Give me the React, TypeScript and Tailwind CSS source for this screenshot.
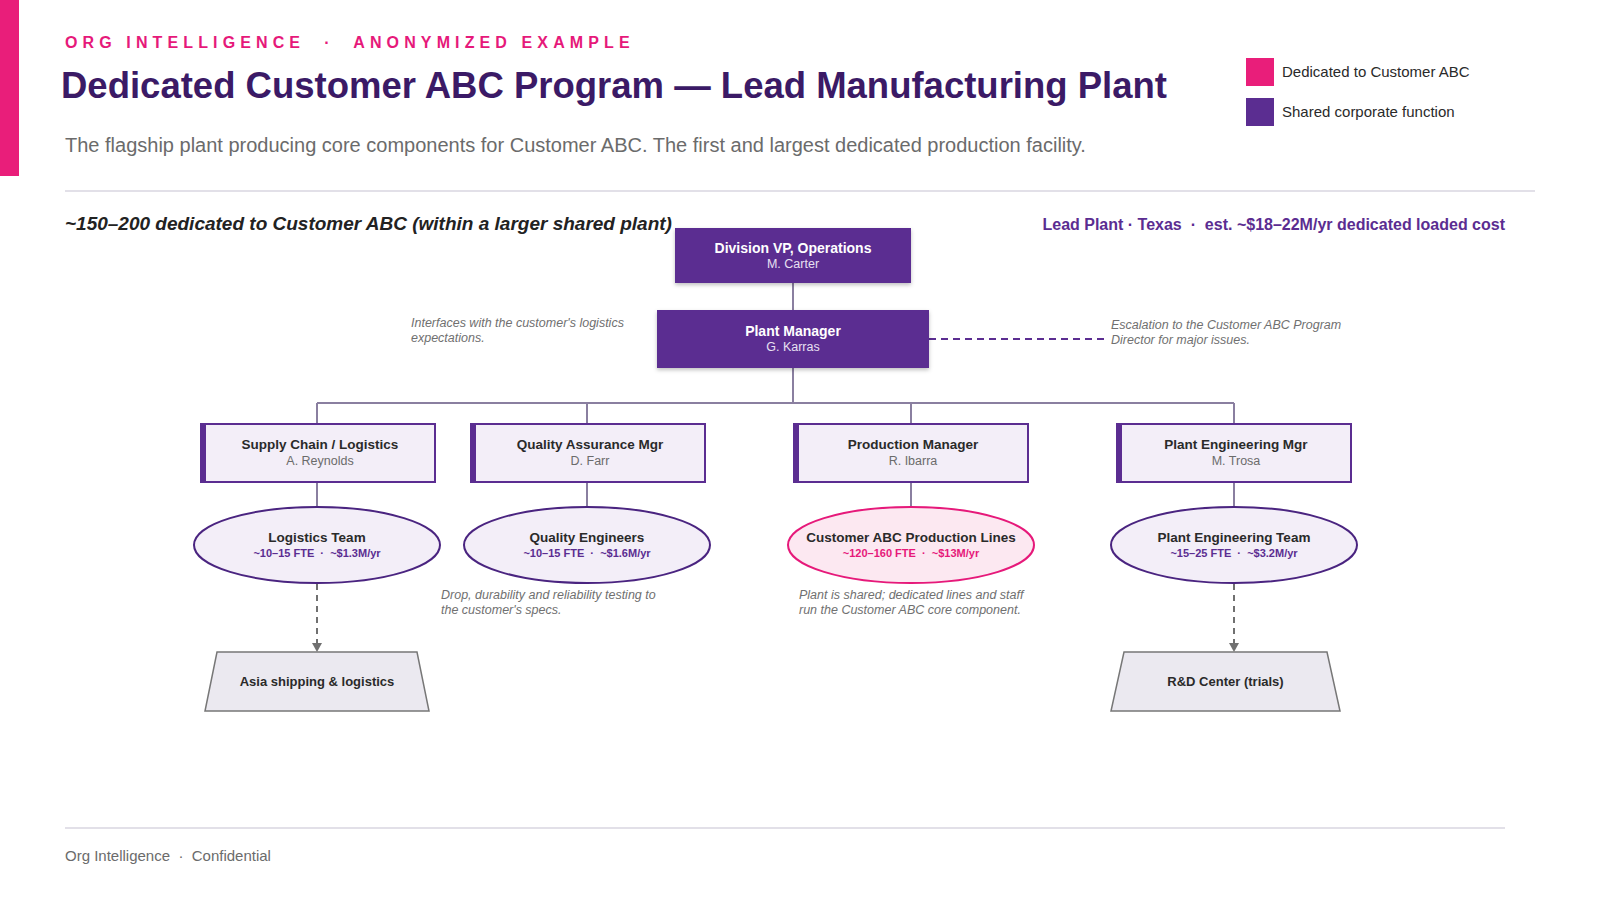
import React from "react";

const P = "#5b2d91";
const PK = "#e6197a";

function Mgr({ x, y, t, s }: { x: number; y: number; t: string; s: string }) {
  return (
    <div className="absolute flex flex-col items-center justify-center border-2 border-l-[6px] border-[#5b2d91] bg-[#f3eef8]" style={{ left: x, top: y, width: 236, height: 60 }}>
      <div className="text-[13.5px] font-bold text-[#2a2a2a] leading-[16px]">{t}</div>
      <div className="text-[12.5px] text-[#6b6b6b] leading-[16px]">{s}</div>
    </div>
  );
}

function Team({ cx, t, s, pink }: { cx: number; t: string; s: string; pink?: boolean }) {
  return (
    <div className="absolute flex flex-col items-center justify-center" style={{ left: cx - 124, top: 306, width: 248, height: 78 }}>
      <div className="text-[13.5px] font-bold text-[#2a2a2a] leading-[16px]">{t}</div>
      <div className={`text-[11px] font-bold leading-[14px] whitespace-pre ${pink ? "text-[#e6197a]" : "text-[#5b2d91]"}`}>{s}</div>
    </div>
  );
}

function Note({ x, y, children }: { x: number; y: number; children: React.ReactNode }) {
  return (
    <div className="absolute text-[12.5px] italic text-[#707070] leading-[15px] whitespace-nowrap" style={{ left: x, top: y }}>
      {children}
    </div>
  );
}

export default function App() {
  const ell = (cx: number, pink?: boolean) => (
    <ellipse cx={cx} cy={345} rx={123} ry={38} fill={pink ? "#fce8f1" : "#f3eef8"} stroke={pink ? PK : "#4a2480"} strokeWidth={2} />
  );
  return (
    <div className="relative w-full h-[899px] bg-white overflow-hidden" style={{ fontFamily: '"Liberation Sans", Arial, sans-serif' }}>
      <div className="absolute left-0 top-0 w-[19px] h-[176px] bg-[#e91e7a]" />
      <div className="absolute right-[95px] top-[58px] flex flex-col gap-[12px] text-[15px] text-[#2a2a2a] w-[259px]">
        <div className="flex items-center gap-[8px]"><span className="w-[28px] h-[28px] bg-[#e91e7a]" />Dedicated to Customer ABC</div>
        <div className="flex items-center gap-[8px]"><span className="w-[28px] h-[28px] bg-[#5b2d91]" />Shared corporate function</div>
      </div>
      <div className="px-[65px] pt-[34px] w-[1600px]">
        <div className="text-[16px] font-bold tracking-[0.32em] text-[#e6197a] leading-[18px] whitespace-nowrap">ORG INTELLIGENCE &nbsp;·&nbsp; ANONYMIZED EXAMPLE</div>
        <h1 className="mt-[12px] ml-[-4px] text-[36.5px] font-bold text-[#3b1a66] leading-[44px] whitespace-nowrap">Dedicated Customer ABC Program — Lead Manufacturing Plant</h1>
        <p className="mt-[25px] text-[20px] text-[#6b6b6b] leading-[24px] whitespace-nowrap">The flagship plant producing core components for Customer ABC. The first and largest dedicated production facility.</p>
        <div className="mt-[33px] h-[2px] bg-[#e2e0e8]" />
      </div>

      <div className="relative h-[620px] w-[1600px] mt-[8px]">
        <div className="absolute left-[65px] top-[10px] text-[19px] font-bold italic text-[#222] whitespace-nowrap">~150–200 dedicated to Customer ABC (within a larger shared plant)</div>
        <div className="absolute right-[95px] top-[13px] text-[16px] font-bold text-[#5b2d91] whitespace-nowrap">Lead Plant · Texas &nbsp;·&nbsp; est. ~$18–22M/yr dedicated loaded cost</div>

        <svg className="absolute left-0 top-0" width={1600} height={620}>
          <g stroke="#8a7fa0" strokeWidth={2} fill="none">
            <line x1={793} y1={83} x2={793} y2={110} />
            <line x1={793} y1={168} x2={793} y2={203} />
            <line x1={317} y1={203} x2={1234} y2={203} />
            {[317, 587, 911, 1234].map((x) => (
              <g key={x}>
                <line x1={x} y1={203} x2={x} y2={223} />
                <line x1={x} y1={283} x2={x} y2={307} />
              </g>
            ))}
          </g>
          <line x1={929} y1={139} x2={1105} y2={139} stroke={P} strokeWidth={2} strokeDasharray="7 5" />
          {ell(317)}
          {ell(587)}
          {ell(911, true)}
          {ell(1234)}
          {[317, 1234].map((x) => (
            <g key={x}>
              <line x1={x} y1={384} x2={x} y2={444} stroke="#707070" strokeWidth={2} strokeDasharray="6 5" />
              <polygon points={`${x - 5},443 ${x + 5},443 ${x},452`} fill="#707070" />
            </g>
          ))}
          <polygon points="217,452 417,452 429,511 205,511" fill="#ebe9f0" stroke="#777" strokeWidth={1.5} />
          <polygon points="1124,452 1327,452 1340,511 1111,511" fill="#ebe9f0" stroke="#777" strokeWidth={1.5} />
        </svg>

        <div className="absolute flex flex-col items-center justify-center bg-[#5b2d91] text-white shadow-[0_2px_4px_rgba(0,0,0,0.25)]" style={{ left: 675, top: 28, width: 236, height: 55 }}>
          <div className="text-[14px] font-bold leading-[17px]">Division VP, Operations</div>
          <div className="text-[12.5px] leading-[15px] text-[#e8e0f2]">M. Carter</div>
        </div>
        <div className="absolute flex flex-col items-center justify-center bg-[#5b2d91] text-white shadow-[0_2px_4px_rgba(0,0,0,0.25)]" style={{ left: 657, top: 110, width: 272, height: 58 }}>
          <div className="text-[14px] font-bold leading-[17px]">Plant Manager</div>
          <div className="text-[12.5px] leading-[15px] text-[#e8e0f2]">G. Karras</div>
        </div>

        <Note x={411} y={116}>Interfaces with the customer's logistics<br />expectations.</Note>
        <Note x={1111} y={118}>Escalation to the Customer ABC Program<br />Director for major issues.</Note>

        <Mgr x={200} y={223} t="Supply Chain / Logistics" s="A. Reynolds" />
        <Mgr x={470} y={223} t="Quality Assurance Mgr" s="D. Farr" />
        <Mgr x={793} y={223} t="Production Manager" s="R. Ibarra" />
        <Mgr x={1116} y={223} t="Plant Engineering Mgr" s="M. Trosa" />

        <Team cx={317} t="Logistics Team" s="~10–15 FTE  ·  ~$1.3M/yr" />
        <Team cx={587} t="Quality Engineers" s="~10–15 FTE  ·  ~$1.6M/yr" />
        <Team cx={911} t="Customer ABC Production Lines" s="~120–160 FTE  ·  ~$13M/yr" pink />
        <Team cx={1234} t="Plant Engineering Team" s="~15–25 FTE  ·  ~$3.2M/yr" />

        <Note x={441} y={388}>Drop, durability and reliability testing to<br />the customer's specs.</Note>
        <Note x={799} y={388}>Plant is shared; dedicated lines and staff<br />run the Customer ABC core component.</Note>

        <div className="absolute flex items-center justify-center text-[13px] font-bold text-[#2a2a2a]" style={{ left: 205, top: 452, width: 224, height: 59 }}>Asia shipping &amp; logistics</div>
        <div className="absolute flex items-center justify-center text-[13px] font-bold text-[#2a2a2a]" style={{ left: 1111, top: 452, width: 229, height: 59 }}>R&amp;D Center (trials)</div>
      </div>
      <div className="absolute left-[65px] w-[1440px] top-[827px] h-[2px] bg-[#e2e0e8]" />
      <div className="absolute left-[65px] top-[845px] text-[15px] text-[#6b6b6b]">Org Intelligence &nbsp;·&nbsp; Confidential</div>
    </div>
  );
}
